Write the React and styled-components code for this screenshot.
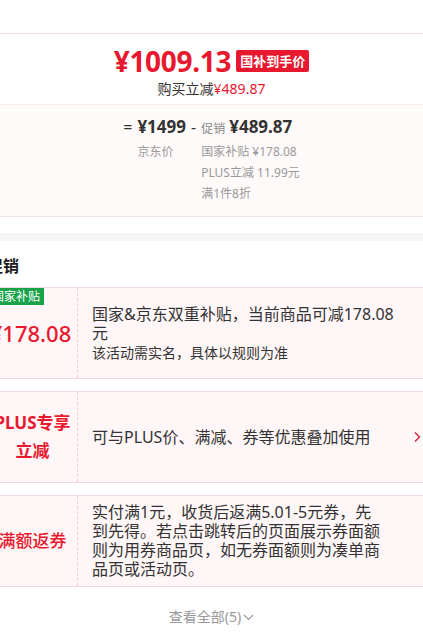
import React from 'react'
import styled, { createGlobalStyle } from 'styled-components'

const Global = createGlobalStyle`
  html, body { margin: 0; padding: 0; background: #fff; }
  body {
    font-family: "Noto Sans", "Noto Sans CJK SC", sans-serif;
    color: #1a1a1a;
    width: 423px;
    overflow: hidden;
  }
`

const red = '#e8182e'

const Page = styled.div`
  width: 423px;
  padding-top: 33px;
  overflow: hidden;
`

const PriceCard = styled.div`
  border-top: 1px solid #f8d9de;
  border-bottom: 1px solid #f1e3e5;
`

const Headline = styled.div`
  display: flex;
  flex-direction: column;
  align-items: center;
  padding: 9px 0 5px;
  border-bottom: 1px solid #fbeaed;
`

const PriceLine = styled.div`
  display: flex;
  align-items: center;
  gap: 5px;
  height: 36px;
`

const BigPrice = styled.span`
  font-size: 28px;
  font-weight: 700;
  color: ${red};
  letter-spacing: -0.3px;
  line-height: 1;
`

const Badge = styled.span`
  background: ${red};
  color: #fff;
  font-size: 13px;
  font-weight: 700;
  line-height: 22px;
  padding: 0 4px;
  border-radius: 2px;
`

const SubLine = styled.div`
  font-size: 14px;
  line-height: 20px;
  color: #333;

  em {
    font-style: normal;
    color: ${red};
  }
`

const Breakdown = styled.div`
  background: #fffafa;
  display: grid;
  grid-template-columns: auto auto auto auto;
  justify-content: center;
  column-gap: 5px;
  padding: 10px 0 12px;
`

const Op = styled.span`
  font-size: 16px;
  color: #333;
  line-height: 24px;
`

const Amount = styled.span`
  font-size: 17px;
  font-weight: 700;
  color: #333;
  line-height: 24px;

  small {
    font-size: 12px;
    font-weight: 400;
    color: #888;
    margin-right: 4px;
  }
`

const Note = styled.div`
  font-size: 12px;
  color: #999;
  line-height: 21px;
`

const Gap = styled.div`
  height: 16px;
  border-bottom: 8px solid #f6f6f8;
`

const Promo = styled.section`
  padding: 15px 0 0;
  margin: 0 -8px 0 -12px;
`

const Title = styled.h3`
  margin: 0 0 11px -1px;
  font-size: 16px;
  font-weight: 700;
  line-height: 20px;
  color: #1a1a1a;
`

const List = styled.div`
  display: flex;
  flex-direction: column;
  gap: 12px;
`

const Row = styled.div`
  position: relative;
  display: grid;
  grid-template-columns: 90px 1fr;
  min-height: 90px;
  background: #fff6f7;
  border-top: 1px solid #f6d7dc;
  border-bottom: 1px solid #f6d7dc;
`

const Left = styled.div`
  display: flex;
  align-items: center;
  justify-content: center;
  text-align: center;
  border-right: 1px dashed #f0cdd3;
  color: ${red};
  font-size: ${p => p.$size || 17}px;
  font-weight: ${p => p.$bold ? 700 : 500};
  line-height: 28px;
  padding-right: ${p => p.$shift || 0}px;
`

const Tag = styled.span`
  position: absolute;
  top: 0;
  left: 0;
  background: #19a24a;
  color: #fff;
  font-size: 12px;
  line-height: 17px;
  padding: 0 4px;
`

const Right = styled.div`
  display: flex;
  align-items: center;
  padding: 6px ${p => p.$pr || 38}px 6px 14px;
  font-size: 16px;
  line-height: 19px;
  color: #333;
`

const Desc = styled.div`
  flex: 1;

  small {
    display: block;
    font-size: 14px;
    line-height: 19px;
  }
`

const Chevron = styled.span`
  position: absolute;
  right: 10px;
  top: 50%;
  transform: translateY(-50%);
  display: flex;
`

const More = styled.div`
  display: flex;
  justify-content: center;
  align-items: center;
  gap: 2px;
  padding: 20px 0 0;
  font-size: 14px;
  line-height: 20px;
  color: #999;
`

export default function App() {
  return (
    <Page>
      <Global />
      <PriceCard>
        <Headline>
          <PriceLine>
            <BigPrice>¥1009.13</BigPrice>
            <Badge>国补到手价</Badge>
          </PriceLine>
          <SubLine>购买立减<em>¥489.87</em></SubLine>
        </Headline>
        <Breakdown>
          <Op>=</Op>
          <Amount>¥1499</Amount>
          <Op>-</Op>
          <Amount><small>促销</small>¥489.87</Amount>
          <span />
          <Note>京东价</Note>
          <span />
          <Note>
            国家补贴 ¥178.08<br />
            PLUS立减 11.99元<br />
            满1件8折
          </Note>
        </Breakdown>
      </PriceCard>
      <Gap />
      <Promo>
        <Title>促销</Title>
        <List>
          <Row>
            <Tag>国家补贴</Tag>
            <Left $size={22} $shift={4}>¥178.08</Left>
            <Right $pr={26}>
              <Desc>
                国家&amp;京东双重补贴，当前商品可减178.08元
                <small>该活动需实名，具体以规则为准</small>
              </Desc>
            </Right>
          </Row>
          <Row>
            <Left $bold $size={17}>PLUS专享<br />立减</Left>
            <Right>
              <Desc>可与PLUS价、满减、券等优惠叠加使用</Desc>
            </Right>
            <Chevron>
              <svg width="7" height="11" viewBox="0 0 7 11" fill="none">
                <path d="M1 1l4.5 4.5L1 10" stroke="#c4283a" strokeWidth="1.4" />
              </svg>
            </Chevron>
          </Row>
          <Row>
            <Left>满额返券</Left>
            <Right $pr={44}>
              <Desc>实付满1元，收货后返满5.01-5元券，先到先得。若点击跳转后的页面展示券面额则为用券商品页，如无券面额则为凑单商品页或活动页。</Desc>
            </Right>
          </Row>
        </List>
      </Promo>
      <More>
        查看全部(5)
        <svg width="11" height="7" viewBox="0 0 11 7" fill="none">
          <path d="M1 1l4.5 4.5L10 1" stroke="#999" strokeWidth="1.2" />
        </svg>
      </More>
    </Page>
  )
}
